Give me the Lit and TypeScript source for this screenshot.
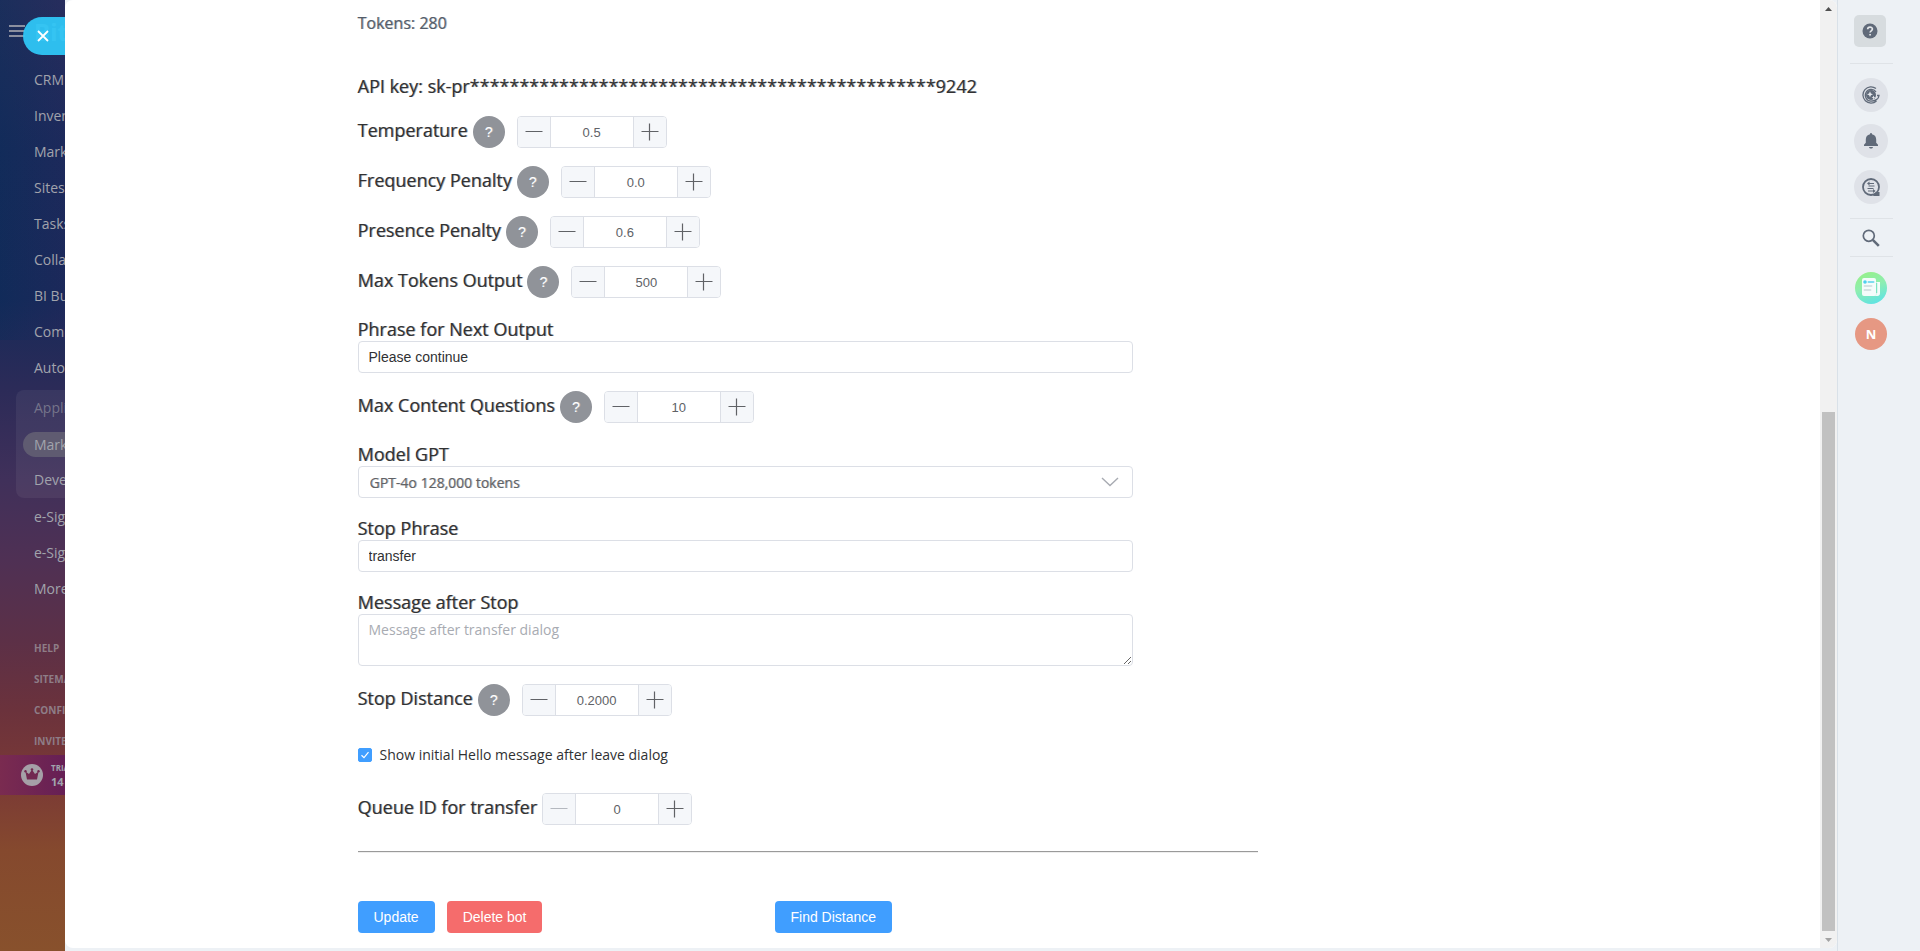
import { LitElement, html, css, nothing } from "lit";
import { customElement, property, state } from "lit/decorators.js";
import { classMap } from "lit/directives/class-map.js";
import { styleMap } from "lit/directives/style-map.js";

@customElement("number-stepper")
class NumberStepper extends LitElement {
  @property() label = "";
  @property({ type: Number }) value = 0;
  @property({ type: Number }) step = 1;
  @property({ type: Number }) precision = 0;
  @property({ type: Boolean }) help = false;

  static styles = css`
    :host { display: flex; align-items: center; height: 32px; }
    label { font-size: 18px; line-height: 24px; color: #303133; text-shadow: 1px 0 0 rgba(48, 49, 51, 0.45); padding-bottom: 4px; margin-right: 5px; white-space: nowrap; }
    button { font: inherit; margin: 0; padding: 0; border: 0; cursor: pointer; }
    .help { width: 32px; height: 32px; border-radius: 50%; background: #909399; color: #fff; font-family: "Liberation Sans", Arial, sans-serif; font-size: 14px; text-shadow: 1px 0 0 rgba(255, 255, 255, 0.3); margin-right: 12px; }
    .box { display: flex; box-sizing: border-box; width: 150px; height: 32px; border: 1px solid #dcdfe6; border-radius: 4px; overflow: hidden; }
    .box button { flex: none; display: grid; place-items: center; width: 33px; background: #f5f7fa; color: #606266; }
    .box button:first-child { border-right: 1px solid #dcdfe6; }
    .box button:last-child { border-left: 1px solid #dcdfe6; }
    .box button:disabled { color: #b4b8bf; cursor: not-allowed; }
    input { flex: 1; min-width: 0; border: 0; padding: 0; outline: 0; background: #fff; text-align: center; color: #606266; font-family: "Liberation Sans", Arial, sans-serif; font-size: 13px; }
    svg { width: 18px; height: 18px; stroke: currentColor; stroke-width: 1.2; fill: none; }
  `;

  private change(by: number) {
    this.value = Math.max(0, this.value + by * this.step);
  }

  render() {
    return html`
      <label for="field">${this.label}</label>
      ${this.help ? html`<button class="help" type="button" aria-label="About ${this.label}">?</button>` : nothing}
      <div class="box">
        <button type="button" aria-label="Decrease" ?disabled=${this.value <= 0 && this.step === 1} @click=${() => this.change(-1)}>
          <svg viewBox="0 0 18 18"><path d="M.5 8.500h17" /></svg>
        </button>
        <input id="field" .value=${this.value.toFixed(this.precision)} />
        <button type="button" aria-label="Increase" @click=${() => this.change(1)}>
          <svg viewBox="0 0 18 18"><path d="M.5 8.500h17M8.500 .5v17" /></svg>
        </button>
      </div>
    `;
  }
}

@customElement("side-menu")
class SideMenu extends LitElement {
  static styles = css`
    :host {
      display: flex; flex-direction: column; overflow: hidden; white-space: nowrap;
      color: #a1a3ac; font-size: 14px;
      background:
        linear-gradient(90deg, rgba(0, 45, 90, 0.25), rgba(60, 30, 100, 0.12)) top / 100% 340px no-repeat,
        linear-gradient(180deg, #242f5c 0, #182b5a 150px, #172a59 300px, #2c2b58 390px, #40305a 480px, #4f3054 560px, #5c3047 640px, #6b323c 710px, #7a3936 780px, #85492e 850px, #88512c 100%);
    }
    a { color: inherit; text-decoration: none; }
    .head { display: flex; align-items: center; gap: 9px; padding-left: 9px; height: 62px; }
    .burger { flex: none; width: 16px; height: 12px; border: 0; padding: 0; background: linear-gradient(#8b8f9f 2px, transparent 2px 5px, #8b8f9f 5px 7px, transparent 7px 10px, #8b8f9f 10px); }
    .brand { font-size: 24px; font-weight: 700; }
    nav { display: flex; flex-direction: column; }
    .item { line-height: 36px; height: 36px; padding-left: 34px; }
    .group { display: flex; flex-direction: column; margin: 4px 0 1px 16px; background: rgba(255, 255, 255, 0.06); border-radius: 8px 0 0 8px; }
    .group .item { padding-left: 18px; }
    .group .title { color: #75748a; }
    .group .active { margin: 6px 0 5px 7px; padding-left: 11px; height: 25px; line-height: 25px; border-radius: 13px 0 0 13px; background: #5f5b71; }
    .small { padding-top: 26px; font-size: 10px; font-weight: 700; color: #8e7d87; }
    .small .item { height: 31px; line-height: 31px; }
    .trial { display: flex; align-items: center; gap: 8px; height: 40px; padding-left: 21px; background: linear-gradient(90deg, #7a2b50, #661f55); font-weight: 700; font-size: 11px; line-height: 14px; margin-top: -2px; }
    .trial svg { flex: none; width: 22px; height: 22px; }
    .trial small { display: block; font-size: 8px; }
  `;

  render() {
    const top = ["CRM", "Inventory", "Marketing", "Sites", "Tasks", "Collaboration", "BI Builder", "Company", "Automation"];
    const low = ["e-Signature", "e-Signature for HR", "More"];
    const link = (t: string, cls = {}) => html`<a href="#" class=${classMap({ item: true, ...cls })}>${t}</a>`;
    return html`
      <div class="head"><button class="burger" aria-label="Menu"></button><a class="brand" href="#">Bitrix24</a></div>
      <nav>
        ${top.map((t) => link(t))}
        <div class="group">${link("Applications", { title: true })}${link("Market", { active: true })}${link("Developer", {})}</div>
        ${low.map((t) => link(t))}
      </nav>
      <nav class="small">${["HELP", "SITEMAP", "CONFIGURE", "INVITE"].map((t) => link(t))}</nav>
      <a class="trial" href="#">
        <svg viewBox="0 0 22 22"><circle cx="11" cy="11" r="11" fill="#a5a0a7" /><path d="M4.400 7.400 8 10l3-4.200L14 10l3.600-2.600-1.600 8.200H6z" fill="#722850" /><circle cx="4.500" cy="7.300" r="1.200" fill="#722850" /><circle cx="11" cy="5.500" r="1.300" fill="#722850" /><circle cx="17.500" cy="7.300" r="1.200" fill="#722850" /></svg>
        <span><small>TRIAL</small>14 days</span>
      </a>
    `;
  }
}

@customElement("tool-rail")
class ToolRail extends LitElement {
  static styles = css`
    :host { display: flex; flex-direction: column; align-items: center; box-sizing: border-box; padding: 15px 16px 0 0; border-left: 1px solid #d9e1e8; border-bottom: 1px solid #d5e2ea; background: #edf1f5; color: #606a79; }
    button { display: grid; place-items: center; border: 0; padding: 0; color: inherit; background: #dfe2e8; width: 34px; height: 34px; border-radius: 50%; margin-bottom: 12px; }
    .help { width: 32px; height: 32px; border-radius: 5px; background: #d7dcdf; margin: 0 2px 16px 0; }
    hr { width: 43px; height: 1px; margin: 0; border: 0; background: #dfe3e7; }
    .first { margin-top: 14px; }
    .last { margin-bottom: 14px; }
    .search { background: none; height: 37px; margin: 0; }
    .news, .user { width: 32px; height: 32px; margin: 15px 0 0; }
    .news { background: linear-gradient(160deg, #96f08c 10%, #8eeeb0 45%, #5fe3e3 90%); }
    .user { margin-top: 14px; background: #e69883; color: #fff; font-family: "Open Sans", sans-serif; font-weight: 700; font-size: 13px; }
    svg { display: block; }
  `;

  render() {
    return html`
      <button class="help" aria-label="Help">
        <svg width="16" height="16" viewBox="0 0 16 16"><circle cx="8" cy="8" r="7.500" fill="currentColor" /><path d="M5.700 6.300C5.700 3.300 10.400 3.400 10.400 6.100 10.400 7.800 8.100 7.900 8.100 9.600M8.100 10.900v1.700" fill="none" stroke="#e4e7ea" stroke-width="1.700" /></svg>
      </button>
      <hr />
      <button class="first" aria-label="CoPilot">
        <svg width="18" height="18" viewBox="0 0 18 18" fill="none" stroke="currentColor"><path d="M14 2.600A8.100 8.100 0 1 0 14.500 15M14 5.800A5.900 5.900 0 1 0 9 15.200C13 15.200 16.900 13 17 9.500h-2" stroke-width="1.300" /><circle cx="9" cy="9" r="5" fill="currentColor" stroke="none" /><path d="M8 5.300 8.900 7.400 11 8.300 8.900 9.200 8 11.300 7.100 9.200 5 8.300 7.100 7.400zM11.500 9.500l.6 1.400 1.400.6-1.400.6-.6 1.400-.6-1.400-1.400-.6 1.400-.6z" fill="#e6e9ee" stroke="none" /></svg>
      </button>
      <button aria-label="Notifications">
        <svg width="16" height="18" viewBox="0 0 16 18" fill="currentColor"><path d="M7 2.200C7 .6 9 .6 9 2.200c2.800.6 4.200 2.600 4.200 5.300v3.200L15 12.800V14H1v-1.200l1.800-2.100V7.500C2.800 4.800 4.200 2.800 7 2.200zM6 15h4c-.3 2-3.700 2-4 0z" /></svg>
      </button>
      <button class="last" aria-label="Messages">
        <svg width="18" height="18" viewBox="0 0 18 18" fill="none" stroke="currentColor"><circle cx="9" cy="9" r="8" stroke-width="1.800" /><path d="M14 14h3.500v4H11z" fill="currentColor" stroke="none" /><path d="M6 5.500h6M6.500 8h6M5.500 10.500h6M6 13h6" stroke-width="1" /><path d="M7.500 3.600v3.800L5 5.500zM11 11v4l2.600-2z" fill="currentColor" stroke="none" /></svg>
      </button>
      <hr />
      <button class="search" aria-label="Search">
        <svg width="18" height="18" viewBox="0 0 18 18" fill="none" stroke="currentColor"><circle cx="6.800" cy="6.800" r="5.500" stroke-width="1.700" /><path d="m10.800 10.800 6 6" stroke-width="2.600" /></svg>
      </button>
      <hr />
      <button class="news" aria-label="News">
        <svg width="32" height="32" viewBox="0 0 32 32"><path d="M19 10h6v10a4 4 0 0 1-4 4h-9" fill="#cdf7e6" /><rect x="7" y="6" width="14" height="18" rx="2" fill="#f4fcfb" /><path d="M22 10h3v11a3 3 0 0 1-3 3h-3c2 0 3-1 3-3z" fill="#f4fcfb" /><circle cx="10" cy="10" r="1.800" fill="#4fd0ef" /><path d="M13.500 10h5" stroke="#7edcf0" stroke-width="2" stroke-linecap="round" /><path d="M9.500 14h7M9.500 18h6" stroke="#d5e2e4" stroke-width="1.800" stroke-linecap="round" /><path d="M21.700 11v10" stroke="#69dfb8" stroke-width="1" /></svg>
      </button>
      <button class="user" aria-label="Profile">N</button>
    `;
  }
}

@customElement("app-root")
class AppRoot extends LitElement {
  @state() private scroll = { before: 395, thumb: 518 };

  static styles = css`
    :host { display: grid; grid-template-columns: 65px minmax(0, 1fr) 83px; min-height: 100vh; background: #edf1f5; font-family: "Open Sans", sans-serif; color: #303133; }
    .sheet { display: flex; min-width: 0; margin-bottom: 4px; background: #fff; border-radius: 8px; overflow: hidden; }
    .close { position: absolute; left: 23px; top: 17px; width: 42px; height: 38px; padding: 0 2px 0 0; border: 0; border-radius: 19px 0 0 19px; background: rgba(47, 198, 246, 0.95); display: grid; place-items: center; }
    main { flex: 1; min-width: 0; padding: 11px 0 15px; }
    form { display: flex; flex-direction: column; gap: 18px; max-width: 900px; margin-left: 16.667%; }
    .tokens { margin: 0 0 21px; font-size: 16px; line-height: 24px; color: #535c69; text-shadow: 1px 0 0 rgba(83, 92, 105, 0.45); }
    .key { margin: 0; font-size: 18px; line-height: 24px; overflow-wrap: anywhere; }
    .field { display: flex; flex-direction: column; max-width: 775px; }
    .field label { font-size: 18px; line-height: 24px; }
    .key, .field label { text-shadow: 1px 0 0 rgba(48, 49, 51, 0.45); }
    number-stepper + .field { margin-top: 1px; }
    .field input, .field textarea, select { box-sizing: border-box; width: 100%; height: 32px; margin: 0; padding: 0 10px; border: 1px solid #dcdfe6; border-radius: 4px; background: #fff; color: #303133; font-family: "Liberation Sans", Arial, sans-serif; font-size: 14px; outline: 0; }
    .field textarea { height: 52px; padding: 5px 10px; font-family: "Open Sans", sans-serif; line-height: 20px; resize: vertical; display: block; }
    textarea::placeholder { color: #a8abb2; }
    .pick { display: grid; align-items: center; }
    .pick select, .pick svg { grid-area: 1 / 1; }
    .pick select { appearance: none; padding: 0 11px; font-family: "Open Sans", sans-serif; color: #606266; text-shadow: 1px 0 0 rgba(96, 98, 102, 0.45); }
    .pick svg { justify-self: end; margin-right: 14px; pointer-events: none; }
    .check { display: flex; align-items: center; gap: 8px; margin: 10px 0 9px; font-size: 14px; line-height: 22px; }
    .check input { appearance: none; flex: none; width: 14px; height: 14px; margin: 0; border: 1px solid #409eff; border-radius: 2px; }
    .check input:checked { background: #409eff url('data:image/svg+xml,<svg xmlns="http://www.w3.org/2000/svg" viewBox="0 0 12 12"><path d="M2.500 6.200 5 8.600 9.500 3.200" fill="none" stroke="white" stroke-width="1.200"/></svg>'); }
    .rule { width: 100%; box-sizing: border-box; height: 2px; margin: 8px 0 30px; border: 0; border-top: 1px solid #9a9a9a; background: #eee; }
    .actions { display: grid; grid-template-columns: 417px auto; justify-content: start; }
    .pair { display: flex; gap: 12px; }
    .btn { height: 32px; padding: 0 16px; border: 0; border-radius: 4px; justify-self: start; background: #409eff; color: #fff; font-family: "Liberation Sans", Arial, sans-serif; font-size: 14px; white-space: nowrap; }
    .danger { background: #f56c6c; }
    .bar { flex: none; display: flex; flex-direction: column; align-items: center; width: 17px; background: #f1f1f1; }
    .bar button { width: 17px; height: 17px; padding: 0; border: 0; background: none; display: grid; place-items: center; color: #505050; }
    .bar .down { color: #a3a3a3; }
    .thumb { width: 13px; background: #c1c1c1; }
    tool-rail { min-width: 0; }
  `;

  private text(id: string, label: string, value: string) {
    return html`<div class="field"><label for=${id}>${label}</label><input id=${id} .value=${value} /></div>`;
  }

  private stepper(label: string, value: number, precision = 0, step = 1, help = true) {
    return html`<number-stepper .label=${label} .value=${value} .precision=${precision} .step=${step} .help=${help}></number-stepper>`;
  }

  render() {
    return html`
      <side-menu></side-menu>
      <button class="close" aria-label="Close"><svg width="12" height="12" viewBox="0 0 12 12"><path d="m1 1 10 10M11 1 1 11" stroke="#fff" stroke-width="1.800" /></svg></button>
      <div class="sheet">
        <main>
          <form @submit=${(e: Event) => e.preventDefault()}>
            <p class="tokens">Tokens: 280</p>
            <p class="key">API key: sk-pr${"*".repeat(47)}9242</p>
            ${this.stepper("Temperature", 0.5, 1, 0.1)}
            ${this.stepper("Frequency Penalty", 0, 1, 0.1)}
            ${this.stepper("Presence Penalty", 0.6, 1, 0.1)}
            ${this.stepper("Max Tokens Output", 500)}
            ${this.text("phrase", "Phrase for Next Output", "Please continue")}
            ${this.stepper("Max Content Questions", 10)}
            <div class="field">
              <label for="model">Model GPT</label>
              <div class="pick">
                <select id="model"><option>GPT-4o 128,000 tokens</option></select>
                <svg width="18" height="10" viewBox="0 0 18 10"><path d="m1 1 8 7.500L17 1" fill="none" stroke="#a8abb2" stroke-width="1.400" /></svg>
              </div>
            </div>
            ${this.text("stop", "Stop Phrase", "transfer")}
            <div class="field"><label for="after">Message after Stop</label><textarea id="after" placeholder="Message after transfer dialog"></textarea></div>
            ${this.stepper("Stop Distance", 0.2, 4, 0.0001)}
            <label class="check"><input type="checkbox" checked />Show initial Hello message after leave dialog</label>
            ${this.stepper("Queue ID for transfer", 0, 0, 1, false)}
            <hr class="rule" />
            <div class="actions">
              <div class="pair"><button class="btn">Update</button><button class="btn danger" type="button">Delete bot</button></div>
              <button class="btn" type="button">Find Distance</button>
            </div>
          </form>
        </main>
        <div class="bar">
          <button aria-label="Scroll up"><svg width="7" height="4" viewBox="0 0 7 4"><path d="M0 4 3.500 0 7 4z" fill="currentColor" /></svg></button>
          <div style=${styleMap({ flexGrow: this.scroll.before })}></div>
          <div class="thumb" style=${styleMap({ flexGrow: this.scroll.thumb })}></div>
          <button class="down" aria-label="Scroll down"><svg width="7" height="4" viewBox="0 0 7 4"><path d="M0 0 3.500 4 7 0z" fill="currentColor" /></svg></button>
        </div>
      </div>
      <tool-rail></tool-rail>
    `;
  }
}
